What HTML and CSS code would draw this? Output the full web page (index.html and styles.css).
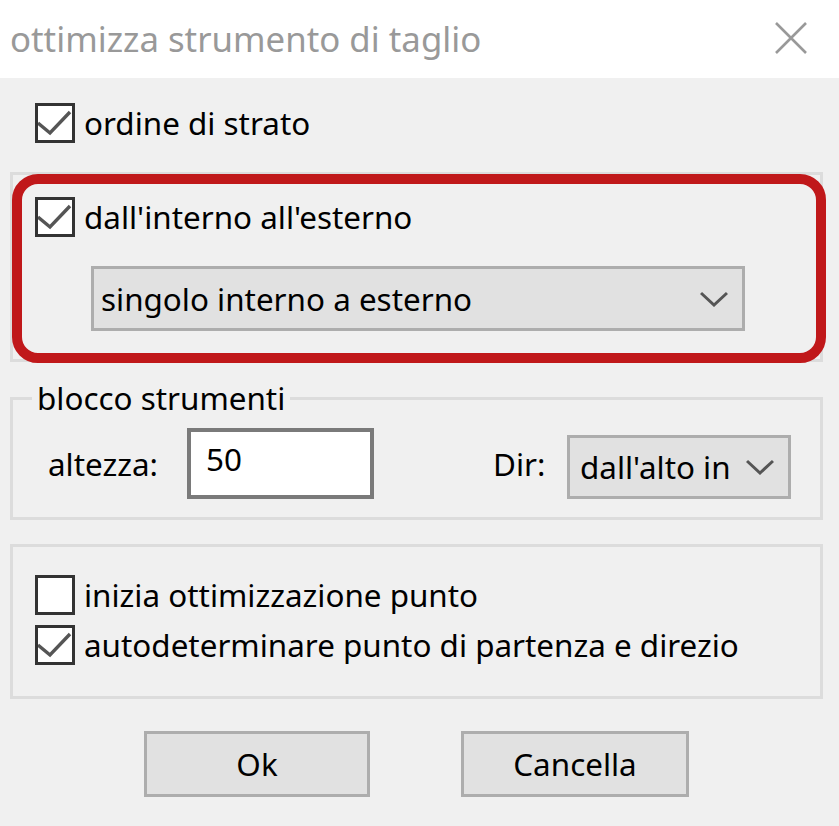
FILE: index.html
```html
<!DOCTYPE html>
<html lang="it">
<head>
<meta charset="utf-8">
<title>ottimizza strumento di taglio</title>
<link rel="stylesheet" href="styles.css">
</head>
<body>
<div class="window">
  <div class="titlebar">
    <span class="title">ottimizza strumento di taglio</span>
    <svg class="close" width="32" height="32" viewBox="0 0 32 32"><path d="M1 1 L31 31 M31 1 L1 31" stroke="#999" stroke-width="2.6" fill="none"/></svg>
  </div>
  <div class="content">
    <div class="check-row first">
      <span class="box"><svg width="34" height="34" viewBox="0 0 34 34"><polyline points="0,17 12,27 32,6" fill="none" stroke="#555" stroke-width="3.4"/></svg></span>
      <span class="label">ordine di strato</span>
    </div>

    <div class="group group-io">
      <div class="check-row">
        <span class="box"><svg width="34" height="34" viewBox="0 0 34 34"><polyline points="0,17 12,27 32,6" fill="none" stroke="#555" stroke-width="3.4"/></svg></span>
        <span class="label">dall'interno all'esterno</span>
      </div>
      <div class="select select-wide">
        <span class="select-text">singolo interno a esterno</span>
        <svg class="chev" width="28" height="16" viewBox="0 0 28 16"><polyline points="1,2 14,14 27,2" fill="none" stroke="#555" stroke-width="3"/></svg>
      </div>
      <div class="highlight"></div>
    </div>

    <fieldset class="group group-block">
      <legend>blocco strumenti</legend>
      <div class="block-row">
        <span class="field-label">altezza:</span>
        <span class="input">50</span>
        <span class="spacer"></span>
        <span class="dir-label">Dir:</span>
        <div class="select select-dir">
          <span class="select-text">dall'alto in</span>
          <svg class="chev" width="28" height="16" viewBox="0 0 28 16"><polyline points="1,2 14,14 27,2" fill="none" stroke="#555" stroke-width="3"/></svg>
        </div>
      </div>
    </fieldset>

    <div class="group group-points">
      <div class="check-row">
        <span class="box"></span>
        <span class="label">inizia ottimizzazione punto</span>
      </div>
      <div class="check-row second">
        <span class="box"><svg width="34" height="34" viewBox="0 0 34 34"><polyline points="0,17 12,27 32,6" fill="none" stroke="#555" stroke-width="3.4"/></svg></span>
        <span class="label">autodeterminare punto di partenza e direzio</span>
      </div>
    </div>

    <div class="buttons">
      <div class="btn btn-ok">Ok</div>
      <div class="btn btn-cancel">Cancella</div>
    </div>
  </div>
</div>
</body>
</html>
```
FILE: styles.css
```css
* { box-sizing: border-box; }
html, body { margin: 0; padding: 0; }
body {
  background: #f0f0f0;
  font-family: "Noto Sans", "Open Sans", sans-serif;
  font-size: 31.4px;
  line-height: 34px;
  color: #000;
}
.window {
  width: 839px;
  height: 826px;
  background: #f0f0f0;
  overflow: hidden;
}
.titlebar {
  height: 78px;
  background: #fff;
  display: flex;
  align-items: center;
  justify-content: space-between;
  padding: 0 32px 0 10px;
}
.title {
  font-size: 34.8px;
  line-height: 38px;
  color: #999;
  white-space: nowrap;
}
.close { display: block; margin-top: -2px; }
.content {
  padding: 0 16px 0 10px;
}
.check-row {
  display: flex;
  align-items: center;
  height: 40px;
  padding-left: 25px;
}
.check-row.first { margin-top: 25px; }
.box {
  width: 40px;
  height: 40px;
  border: 3px solid #333;
  background: #fff;
  flex: none;
  margin-right: 9px;
  position: relative;
}
.box svg { display: block; }
.label { white-space: nowrap; }

.group {
  border: 3px solid #dcdcdc;
  margin: 0;
}
.group-io {
  margin-top: 29px;
  height: 190px;
  padding: 22px 0 28px 0;
  position: relative;
}
.group-io .check-row { padding-left: 22px; }
.select {
  display: flex;
  align-items: center;
  justify-content: space-between;
  background: #e1e1e1;
  border: 3px solid #adadad;
  white-space: nowrap;
}
.select-wide {
  margin-top: 29px;
  margin-left: 78px;
  width: 654px;
  height: 65px;
  padding: 0 14px 0 7px;
}
.chev { display: block; flex: none; }
.highlight {
  position: absolute;
  left: -1px;
  top: -1px;
  width: 814px;
  height: 189px;
  border: 10px solid #c0181a;
  border-radius: 26px;
}

.group-block {
  margin-top: 19px;
  padding: 13px 29px 18px 35px;
  min-width: 0;
}
.group-block legend {
  margin-left: -16px;
  padding: 0 5px;
  line-height: 34px;
}
.block-row {
  display: flex;
  align-items: center;
  height: 71px;
}
.field-label { width: 139px; flex: none; }
.input {
  width: 187px;
  height: 71px;
  background: #fff;
  border: 4px solid #7a7a7a;
  padding: 10px 0 0 15px;
  flex: none;
}
.spacer { flex: 1; }
.dir-label { width: 74px; flex: none; }
.select-dir {
  align-self: flex-end;
  width: 224px;
  height: 64px;
  padding: 0 14px 0 10px;
  flex: none;
}

.group-points {
  margin-top: 24px;
  height: 155px;
  padding: 28px 0 0 0;
}
.group-points .check-row { padding-left: 22px; }
.group-points .check-row.second { margin-top: 10px; }

.buttons {
  display: flex;
  margin-top: 32px;
  padding-left: 134px;
}
.btn {
  height: 66px;
  background: #e1e1e1;
  border: 3px solid #adadad;
  display: flex;
  align-items: center;
  justify-content: center;
}
.btn-ok { width: 226px; }
.btn-cancel { width: 228px; margin-left: 91px; }
```
